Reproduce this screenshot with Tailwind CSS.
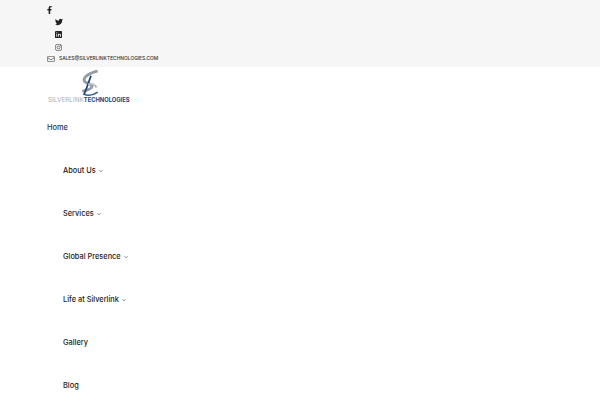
<!DOCTYPE html>
<html lang="en">
<head>
  <meta charset="UTF-8">
  <title>Silverlink Technologies</title>
  <script src="https://cdn.jsdelivr.net/npm/@tailwindcss/browser@4"></script>
</head>
<body class="bg-white h-[400px] overflow-hidden font-['Inter',sans-serif]">

  <!-- Top bar -->
  <div class="bg-[#f6f6f6] h-[67px] pl-[47px] pt-[4px] text-[#222]">
    <div class="h-[12px] flex items-center">
      <svg class="w-[5px] h-[8px]" viewBox="0 0 320 512" fill="#222"><path d="M279 288l14-93h-89v-60c0-25 12-50 52-50h41V6S260 0 225 0c-73 0-121 44-121 125v70H23v93h81v224h100V288z"/></svg>
    </div>
    <div class="h-[12px] flex items-center pl-[8px]">
      <svg class="w-[8px] h-[8px]" viewBox="0 0 512 512" fill="#222"><path d="M459 152c.3 4.500.3 9.100.3 13.600 0 138.700-105.600 298.600-298.600 298.600-59.500 0-114.700-17.200-161.100-47.100 8.400 1 16.600 1.300 25.300 1.300 49.100 0 94.200-16.600 130.300-44.800-46.100-1-84.800-31.200-98.100-72.800 6.500 1 13 1.600 19.800 1.600 9.400 0 18.800-1.300 27.600-3.600-48.100-9.700-84.100-52-84.100-103v-1.300c14 7.800 30.200 12.700 47.400 13.300-28.300-18.800-46.800-51-46.800-87.400 0-19.500 5.200-37.400 14.300-53 51.700 63.700 129.300 105.300 216.400 109.800-1.600-7.800-2.600-15.900-2.600-24 0-57.800 46.800-104.900 104.900-104.900 30.200 0 57.500 12.700 76.700 33.100 23.700-4.500 46.500-13.300 66.600-25.300-7.800 24-24.400 44.200-46.100 57.200 21.100-2.300 41.600-8.100 60.400-16.200-14.300 20.800-32.200 39.300-52.600 54.200z"/></svg>
    </div>
    <div class="h-[13px] flex items-center pl-[8px]">
      <svg class="w-[7px] h-[7px]" viewBox="0 0 16 16"><rect width="16" height="16" rx="2" fill="#222"/><rect x="3" y="6.500" width="2" height="6.500" fill="#f5f5f5"/><rect x="3" y="3" width="2" height="2" fill="#f5f5f5"/><path d="M7 6.500h2v1c.5-.8 1.300-1.200 2.200-1.200 1.500 0 2.300 1 2.300 2.700v4h-2V9.500c0-.9-.4-1.400-1.100-1.400S9 8.600 9 9.500V13H7z" fill="#f5f5f5"/></svg>
    </div>
    <div class="h-[12px] flex items-center pl-[8px]">
      <svg class="w-[7px] h-[7px]" viewBox="0 0 16 16" fill="none" stroke="#444" stroke-width="1.500"><rect x="1" y="1" width="14" height="14" rx="4"/><circle cx="8" cy="8" r="3.200"/><circle cx="12" cy="4" r=".5" fill="#444"/></svg>
    </div>
    <div class="h-[11px] flex items-center">
      <svg class="w-[8px] h-[6px]" viewBox="0 0 16 13" fill="none" stroke="#333" stroke-width="1.300"><rect x=".7" y=".7" width="14.600" height="11.600" rx="1.500"/><path d="M1 3.500l7 5 7-5"/></svg>
      <span class="ml-[4px] text-[4.900px] font-medium leading-none text-[#333]">SALES@SILVERLINKTECHNOLOGIES.COM</span>
    </div>
  </div>

  <!-- Logo -->
  <div class="h-[39px] pl-[48px] flex flex-col items-start">
    <svg class="ml-[29px] mt-[3px] w-[24px] h-[27px]" viewBox="0 0 24 28" fill="none">
      <path d="M21 1C13 3 6 7 7 11c.6 3 8 3 8 6 0 3-6 4-10 5" stroke="#949ca8" stroke-width="3"/>
      <path d="M14 6c-2 6-4 12-7 19" stroke="#1f3f73" stroke-width="1.800"/>
      <path d="M6 25c5 2 11 1 15-2" stroke="#2f5d94" stroke-width="1.500"/>
      <path d="M11 15c3-1 7 0 9 3" stroke="#b6bcc5" stroke-width="2"/>
    </svg>
    <div class="-mt-[1px] flex leading-[8px] whitespace-nowrap">
      <span class="text-[6.400px] text-[#a9adb3]">SILVERLINK</span><span class="text-[5.800px] font-bold text-[#1c4478]">TECHNOLOGIES</span>
    </div>
  </div>

  <!-- Nav -->
  <nav class="text-[7.400px] font-medium text-[#222]">
    <a class="flex items-center h-[43px] pl-[47px] text-[#1d3461]">Home</a>
    <a class="flex items-center h-[43px] pl-[63px]">About Us
      <svg class="ml-[3px] w-[4px] h-[4px]" viewBox="0 0 10 10" fill="none" stroke="#333" stroke-width="1.400"><path d="M1 3l4 4 4-4"/></svg>
    </a>
    <a class="flex items-center h-[43px] pl-[63px]">Services
      <svg class="ml-[3px] w-[4px] h-[4px]" viewBox="0 0 10 10" fill="none" stroke="#333" stroke-width="1.400"><path d="M1 3l4 4 4-4"/></svg>
    </a>
    <a class="flex items-center h-[43px] pl-[63px]">Global Presence
      <svg class="ml-[3px] w-[4px] h-[4px]" viewBox="0 0 10 10" fill="none" stroke="#333" stroke-width="1.400"><path d="M1 3l4 4 4-4"/></svg>
    </a>
    <a class="flex items-center h-[43px] pl-[63px]">Life at Silverlink
      <svg class="ml-[3px] w-[4px] h-[4px]" viewBox="0 0 10 10" fill="none" stroke="#333" stroke-width="1.400"><path d="M1 3l4 4 4-4"/></svg>
    </a>
    <a class="flex items-center h-[43px] pl-[63px]">Gallery</a>
    <a class="flex items-center h-[43px] pl-[63px]">Blog</a>
  </nav>

</body>
</html>
